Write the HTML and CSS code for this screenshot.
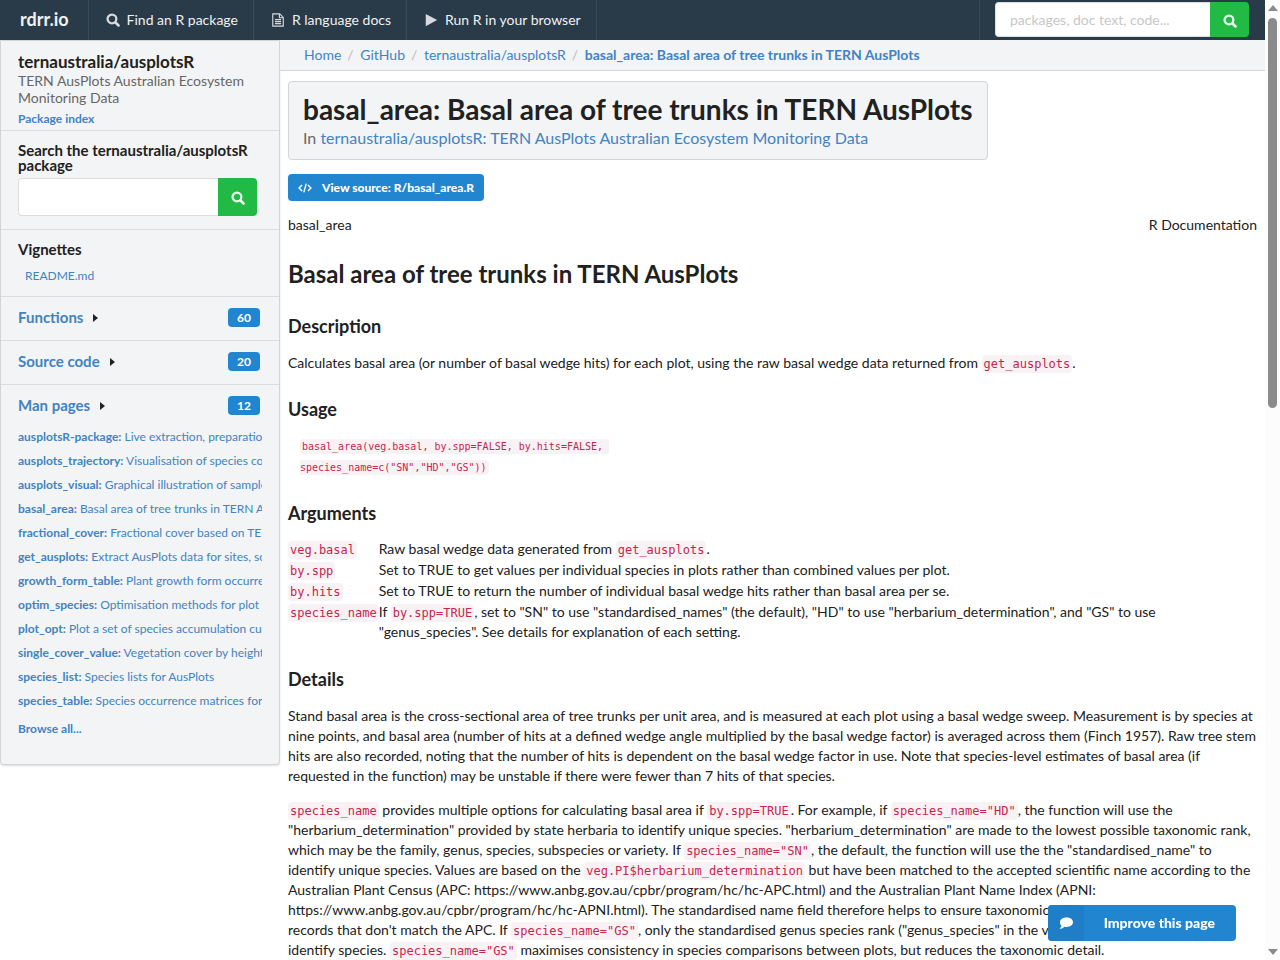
FILE: index.html
```
<!DOCTYPE html>
<html lang="en">
<head>
  <meta charset="UTF-8" />
  <meta name="viewport" content="width=device-width, initial-scale=1" />
  <title>basal_area: Basal area of tree trunks in TERN AusPlots</title>

  <link rel="stylesheet" href="styles.css">
</head>
<body>
  <svg class="sprite" aria-hidden="true">
    <symbol id="search" viewBox="0 0 16 16">
      <circle cx="6.8" cy="6.8" r="5" fill="none" stroke="currentColor" stroke-width="2.6" />
      <path d="M10.6 10.6l3.7 3.7" stroke="currentColor" stroke-width="3" stroke-linecap="round" />
    </symbol>
  </svg>

  <header class="topbar">
    <nav>
      <a class="brand" href="#">rdrr.io</a>
      <a href="#"><svg class="icon"><use href="#search" /></svg>Find an R package</a>
      <a href="#">
        <svg class="icon" viewBox="0 0 14 16" fill="none" stroke="currentColor" stroke-width="1.3">
          <path d="M1 1h8l4 4v10H1zM8.6 1v4.4H13M3.5 7.5h7M3.5 9.8h7M3.5 12.1h7" />
        </svg>R language docs</a>
      <a href="#">
        <svg class="icon" viewBox="0 0 14 16" fill="currentColor"><path d="M1 1l13 7-13 7z" /></svg>Run R in your browser</a>
    </nav>
    <form class="top-search search-box">
      <input type="text" aria-label="Search" placeholder="packages, doc text, code..." />
      <button type="button" aria-label="Search"><svg class="icon"><use href="#search" /></svg></button>
    </form>
  </header>

  <div class="page">
    <aside class="sidebar">
      <section class="package">
        <h2>ternaustralia/ausplotsR</h2>
        <p>TERN AusPlots Australian Ecosystem Monitoring Data</p>
        <a href="#">Package index</a>
      </section>

      <section class="package-search">
        <label for="package-query">Search the ternaustralia/ausplotsR package</label>
        <form class="search-box">
          <input type="text" id="package-query" />
          <button type="button" aria-label="Search package"><svg class="icon"><use href="#search" /></svg></button>
        </form>
      </section>

      <section class="vignettes">
        <h3>Vignettes</h3>
        <a href="#">README.md</a>
      </section>

      <section class="group">
        <h3><a href="#">Functions</a><i class="caret"></i><span class="label">60</span></h3>
      </section>

      <section class="group">
        <h3><a href="#">Source code</a><i class="caret"></i><span class="label">20</span></h3>
      </section>

      <section class="group">
        <h3><a href="#">Man pages</a><i class="caret"></i><span class="label">12</span></h3>
        <ul>
          <li><a href="#"><b>ausplotsR-package:</b> Live extraction, preparation, visualisation</a></li>
          <li><a href="#"><b>ausplots_trajectory:</b> Visualisation of species composition</a></li>
          <li><a href="#"><b>ausplots_visual:</b> Graphical illustration of sample plots</a></li>
          <li><a href="#"><b>basal_area:</b> Basal area of tree trunks in TERN AusPlots</a></li>
          <li><a href="#"><b>fractional_cover:</b> Fractional cover based on TERN AusPlots</a></li>
          <li><a href="#"><b>get_ausplots:</b> Extract AusPlots data for sites, scores</a></li>
          <li><a href="#"><b>growth_form_table:</b> Plant growth form occurrence</a></li>
          <li><a href="#"><b>optim_species:</b> Optimisation methods for plot selection</a></li>
          <li><a href="#"><b>plot_opt:</b> Plot a set of species accumulation curves</a></li>
          <li><a href="#"><b>single_cover_value:</b> Vegetation cover by height</a></li>
          <li><a href="#"><b>species_list:</b> Species lists for AusPlots</a></li>
          <li><a href="#"><b>species_table:</b> Species occurrence matrices for plots</a></li>
        </ul>
        <a class="browse" href="#">Browse all...</a>
      </section>
    </aside>

    <div class="content">
      <nav class="breadcrumb">
        <a href="#">Home</a><span>/</span>
        <a href="#">GitHub</a><span>/</span>
        <a href="#">ternaustralia/ausplotsR</a><span>/</span>
        <a class="active" href="#">basal_area: Basal area of tree trunks in TERN AusPlots</a>
      </nav>

      <main>
        <div class="title-box">
          <h1>basal_area: Basal area of tree trunks in TERN AusPlots</h1>
          <p>In <a href="#">ternaustralia/ausplotsR: TERN AusPlots Australian Ecosystem Monitoring Data</a></p>
        </div>

        <a class="source-button" href="#">
          <svg class="icon" viewBox="0 0 16 14" fill="none" stroke="currentColor" stroke-width="1.6">
            <path d="M4.6 3.5L1.2 7l3.4 3.5M11.4 3.5L14.8 7l-3.4 3.5M9.4 2L6.6 12" />
          </svg>View source: R/basal_area.R</a>

        <div class="doc-head"><span>basal_area</span><span>R Documentation</span></div>

        <h2>Basal area of tree trunks in TERN AusPlots</h2>

        <h3>Description</h3>
        <p>Calculates basal area (or number of basal wedge hits) for each plot, using the raw basal wedge data returned from <code>get_ausplots</code>.</p>

        <h3>Usage</h3>
        <pre><code>basal_area(veg.basal, by.spp=FALSE, by.hits=FALSE, 
species_name=c("SN","HD","GS"))</code></pre>

        <h3>Arguments</h3>
        <table>
          <tr><td><code>veg.basal</code></td><td>Raw basal wedge data generated from <code>get_ausplots</code>.</td></tr>
          <tr><td><code>by.spp</code></td><td>Set to TRUE to get values per individual species in plots rather than combined values per plot.</td></tr>
          <tr><td><code>by.hits</code></td><td>Set to TRUE to return the number of individual basal wedge hits rather than basal area per se.</td></tr>
          <tr><td><code>species_name</code></td><td>If <code>by.spp=TRUE</code>, set to "SN" to use "standardised_names" (the default), "HD" to use "herbarium_determination", and "GS" to use "genus_species". See details for explanation of each setting.</td></tr>
        </table>

        <h3>Details</h3>
        <p>Stand basal area is the cross-sectional area of tree trunks per unit area, and is measured at each plot using a basal wedge sweep. Measurement is by species at nine points, and basal area (number of hits at a defined wedge angle multiplied by the basal wedge factor) is averaged across them (Finch 1957). Raw tree stem hits are also recorded, noting that the number of hits is dependent on the basal wedge factor in use. Note that species-level estimates of basal area (if requested in the function) may be unstable if there were fewer than 7 hits of that species.</p>
        <p><code>species_name</code> provides multiple options for calculating basal area if <code>by.spp=TRUE</code>. For example, if <code>species_name="HD"</code>, the function will use the "herbarium_determination" provided by state herbaria to identify unique species. "herbarium_determination" are made to the lowest possible taxonomic rank, which may be the family, genus, species, subspecies or variety. If <code>species_name="SN"</code>, the default, the function will use the the "standardised_name" to identify unique species. Values are based on the <code>veg.PI$herbarium_determination</code> but have been matched to the accepted scientific name according to the Australian Plant Census (APC: https://www.anbg.gov.au/cpbr/program/hc/hc-APC.html) and the Australian Plant Name Index (APNI: https://www.anbg.gov.au/cpbr/program/hc/hc-APNI.html). The standardised name field therefore helps to ensure taxonomic consistency, it excludes some records that don't match the APC. If <code>species_name="GS"</code>, only the standardised genus species rank ("genus_species" in the veg.PI data frame) is used to identify species. <code>species_name="GS"</code> maximises consistency in species comparisons between plots, but reduces the taxonomic detail.</p>
      </main>
    </div>
  </div>

  <button class="improve" type="button">
    <span class="improve-icon">
      <svg class="icon" viewBox="0 0 16 14" fill="currentColor"><path d="M8.5 1.5c3.7 0 6.5 2 6.5 4.7s-2.8 4.7-6.5 4.7c-.7 0-1.3-.1-1.9-.2-1.3 1.2-2.9 2-5 2.1.9-.8 1.6-1.7 1.8-3.2C2.5 8.800 2 7.600 2 6.200c0-2.700 2.800-4.700 6.500-4.700z" /></svg>
    </span>
    <span class="improve-text">Improve this page</span>
  </button>

  <div class="scrollbar" aria-hidden="true">
    <i class="arrow-up"></i>
    <i class="thumb"></i>
    <i class="arrow-down"></i>
  </div>
</body>
</html>
```
FILE: styles.css
```
*, *::before, *::after {
  box-sizing: border-box;
}

body {
  margin: 0;
  padding: 40px 15px 0 0;
  font-family: Lato, "Liberation Sans", sans-serif;
  font-size: 14px;
  line-height: 20px;
  color: #212121;
  background: #fff;
}

a {
  color: #4183c4;
  text-decoration: none;
}

h1, h2, h3, p, ul, pre {
  margin: 0;
  padding: 0;
}

input, button {
  font-family: inherit;
  font-size: 14px;
  border: 0;
  outline: 0;
}

button {
  cursor: pointer;
}

.sprite {
  position: absolute;
  width: 0;
  height: 0;
}

.icon {
  width: 14px;
  height: 14px;
  flex: none;
}

/* Top bar */
.topbar {
  position: fixed;
  top: 0;
  left: 0;
  right: 15px;
  z-index: 10;
  display: flex;
  justify-content: space-between;
  height: 40px;
  background: #293a48;
}

.topbar nav {
  display: flex;
}

.topbar nav a {
  display: flex;
  align-items: center;
  padding: 0 15px 0 17px;
  color: #f0f1f2;
  border-right: 1px solid #3a4a57;
}

.topbar nav .icon {
  margin-right: 7px;
  color: #d6dadd;
}

.topbar nav .brand {
  padding: 0 19px 2px 20px;
  font-size: 18px;
  font-weight: 700;
}

.search-box {
  display: flex;
}

.search-box input {
  flex: 1;
  min-width: 0;
  padding: 0 14px;
  border: 1px solid #dededf;
  border-right: 0;
  border-radius: 4px 0 0 4px;
  background: #fff;
}

.search-box input::placeholder {
  color: #c7c7c7;
}

.search-box button {
  display: flex;
  align-items: center;
  justify-content: center;
  width: 39px;
  padding: 2px 0 0;
  color: #e9f8ec;
  background: #21ba45;
  border-radius: 0 4px 4px 0;
}

.top-search {
  width: 286px;
  padding: 2px 16px 3px 15px;
  border-left: 1px solid #3a4a57;
}

/* Sidebar */
.page {
  display: flex;
  align-items: flex-start;
}

.sidebar {
  flex: none;
  width: 280px;
  background: #f3f4f5;
  border: 1px solid #d4d4d5;
  border-radius: 0 0 4px 4px;
  box-shadow: 0 1px 2px #22242626;
}

.sidebar section {
  padding: 11px 17px 13px;
  border-bottom: 1px solid #dcddde;
}

.sidebar section:last-child {
  padding-bottom: 25px;
  border-bottom: 0;
}

.sidebar h3, .sidebar label {
  font-size: 15px;
  font-weight: 700;
}

.sidebar .package {
  padding: 11px 17px 1px;
}

.package h2 {
  font-size: 17px;
  line-height: 20px;
}

.package p {
  line-height: 17px;
  color: #666;
}

.package a {
  display: block;
  margin-top: 3px;
  font-size: 12px;
  font-weight: 700;
}

.sidebar .package-search {
  padding: 12px 22px 13px 17px;
}

.package-search label {
  display: block;
  margin-bottom: 5px;
  line-height: 15px;
}

.package-search .search-box {
  height: 38px;
}

.sidebar .vignettes {
  padding: 9px 17px 10px;
}

.vignettes a {
  display: block;
  margin: 7px 7px 0;
  font-size: 12px;
}

.group h3 {
  display: flex;
  align-items: center;
  margin-right: 2px;
  line-height: 19px;
}

.caret {
  margin-left: 10px;
  border: 4px solid transparent;
  border-left: 5px solid #222;
  border-right: 0;
}

.label {
  width: 32px;
  margin-left: auto;
  font-size: 12px;
  text-align: center;
  line-height: 19px;
  color: #fff;
  background: #2185d0;
  border-radius: 4px;
}

.group ul {
  margin-top: 10px;
  list-style: none;
}

.group li {
  overflow: hidden;
  font-size: 12px;
  line-height: 24px;
  white-space: nowrap;
}

.browse {
  display: block;
  margin-top: 6px;
  font-size: 12px;
  font-weight: 700;
}

/* Content */
.content {
  flex: 1;
  min-width: 0;
}

.breadcrumb {
  height: 31px;
  padding: 5px 24px;
  background: #f3f4f5;
  border-bottom: 1px solid #d4d4d5;
}

.breadcrumb span {
  margin: 0 3px 0 6px;
  color: #bbb;
}

.breadcrumb .active {
  font-weight: 700;
}

main {
  padding: 10px 8px 0;
}

.title-box {
  width: fit-content;
  padding: 11px 14px;
  background: #f3f4f5;
  border: 1px solid #d4d4d5;
  border-radius: 4px;
}

.title-box h1 {
  font-size: 28px;
  line-height: 33px;
}

.title-box p {
  margin: 2px 0 0;
  font-size: 16px;
  color: #666;
}

.source-button {
  display: inline-flex;
  align-items: center;
  height: 27px;
  margin: 14px 0;
  padding: 0 10px;
  font-size: 12px;
  font-weight: 900;
  color: #fff;
  background: #2185d0;
  border-radius: 4px;
}

.source-button .icon {
  margin-right: 10px;
}

.doc-head {
  display: flex;
  justify-content: space-between;
}

main h2 {
  margin: 23px 0 0;
  font-size: 24px;
  line-height: 31px;
}

main h3 {
  margin: 26px 0 15px;
  font-size: 18px;
  line-height: 21px;
}

h2 + h3 {
  margin-top: 27px;
}

main p {
  margin-bottom: 14px;
}

main h3 + p {
  padding-top: 1px;
}

code {
  padding: 2px;
  font-family: Consolas, "DejaVu Sans Mono", monospace;
  font-size: 12px;
  line-height: 16px;
  color: #c7254e;
  background: #f9f2f4;
  border-radius: 4px;
}

pre {
  padding: 0 12px;
  line-height: 21px;
}

pre code {
  font-size: 10px;
}

table {
  border-spacing: 0;
}

td {
  padding: 0 0 1px;
  line-height: 20px;
  vertical-align: top;
}

/* Feedback button */
.improve {
  position: fixed;
  right: 44px;
  bottom: 19px;
  z-index: 5;
  display: flex;
  height: 36px;
  padding: 0;
  overflow: hidden;
  color: #fff;
  background: #2185d0;
  border-radius: 4px;
}

.improve-icon {
  display: flex;
  align-items: center;
  justify-content: center;
  width: 36px;
  height: 36px;
  background: #1f7ec5;
}

.improve-icon .icon {
  width: 16px;
}

.improve-text {
  padding: 0 21px 0 20px;
  font-weight: 900;
  line-height: 36px;
}

/* Scrollbar strip */
.scrollbar {
  position: fixed;
  top: 0;
  right: 0;
  bottom: 0;
  z-index: 20;
  display: flex;
  flex-direction: column;
  align-items: center;
  width: 15px;
  padding: 5px 0;
  background: #fcfcfc;
}

.arrow-up, .arrow-down {
  border: 5px solid transparent;
}

.arrow-up {
  border-top: 0;
  border-bottom: 6px solid #8b8b8b;
}

.arrow-down {
  margin-top: auto;
  border-bottom: 0;
  border-top: 6px solid #8b8b8b;
}

.thumb {
  width: 9px;
  height: 41%;
  margin-top: 7px;
  background: #8b8b8b;
  border-radius: 5px;
}
```
